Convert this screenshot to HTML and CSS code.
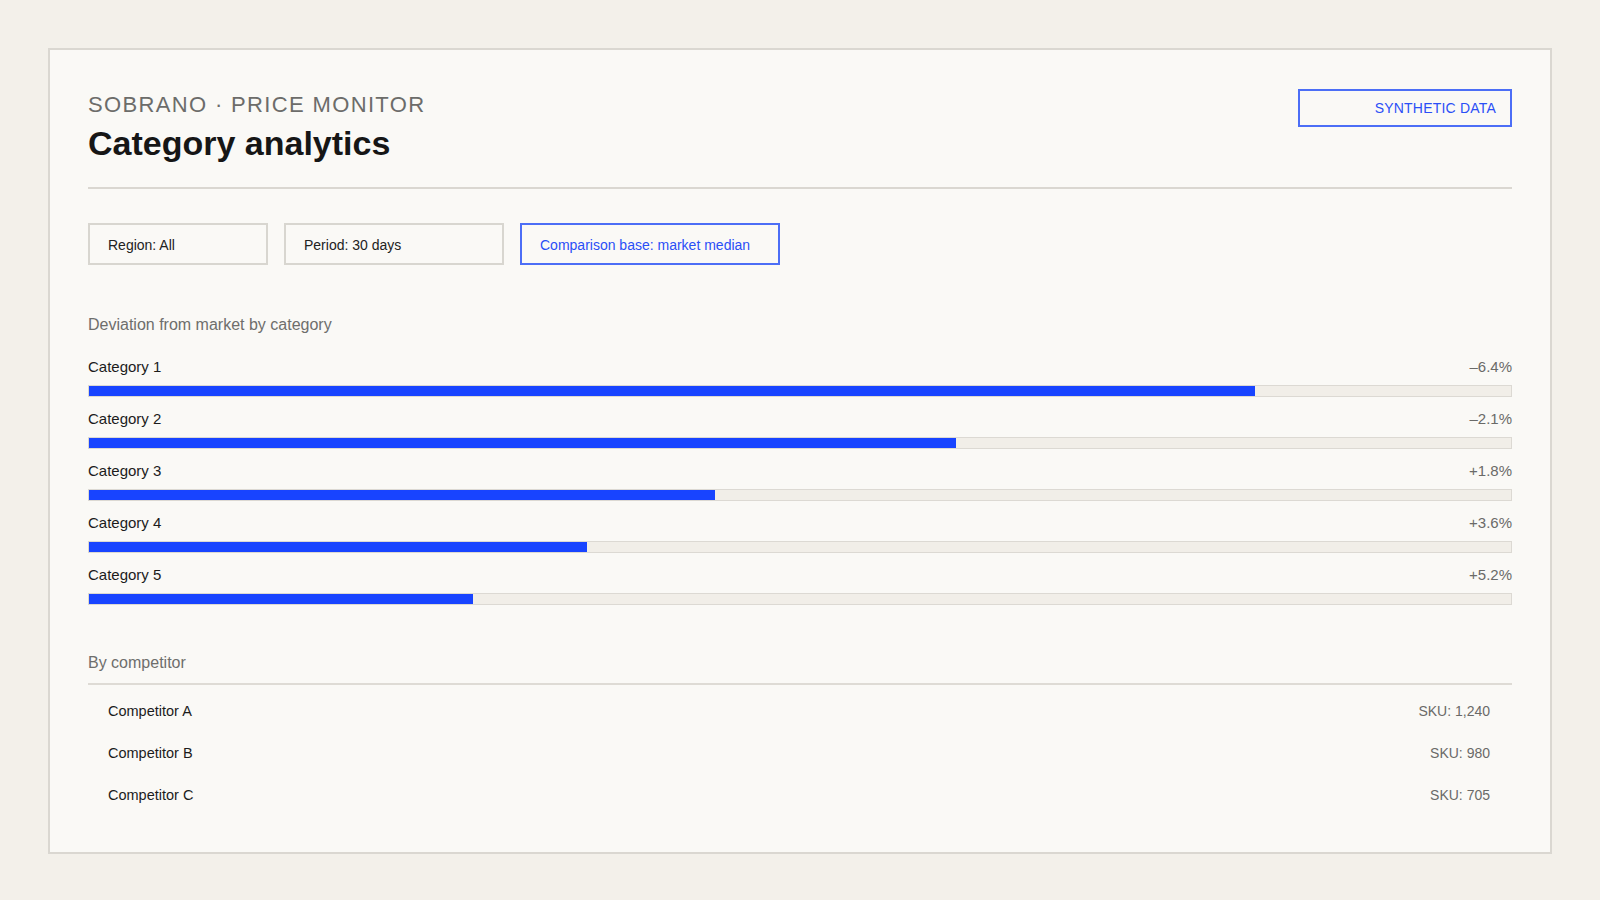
FILE: index.html
```html
<!DOCTYPE html>
<html lang="en">
<head>
<meta charset="utf-8">
<title>Category analytics</title>
<link rel="stylesheet" href="styles.css">
</head>
<body>
<div class="card">
  <header class="header">
    <div class="heading">
      <div class="eyebrow">Sobrano · Price monitor</div>
      <h1 class="title">Category analytics</h1>
    </div>
    <div class="badge">SYNTHETIC DATA</div>
  </header>

  <div class="filters">
    <div class="chip chip-region">Region: All</div>
    <div class="chip chip-period">Period: 30 days</div>
    <div class="chip chip-base chip-active">Comparison base: market median</div>
  </div>

  <section class="deviation">
    <h2 class="section-title">Deviation from market by category</h2>
    <div class="cat-list">
      <div class="cat">
        <div class="cat-head"><span class="cat-name">Category 1</span><span class="cat-value">–6.4%</span></div>
        <div class="track"><div class="fill" style="width: 82%"></div></div>
      </div>
      <div class="cat">
        <div class="cat-head"><span class="cat-name">Category 2</span><span class="cat-value">–2.1%</span></div>
        <div class="track"><div class="fill" style="width: 61%"></div></div>
      </div>
      <div class="cat">
        <div class="cat-head"><span class="cat-name">Category 3</span><span class="cat-value">+1.8%</span></div>
        <div class="track"><div class="fill" style="width: 44%"></div></div>
      </div>
      <div class="cat">
        <div class="cat-head"><span class="cat-name">Category 4</span><span class="cat-value">+3.6%</span></div>
        <div class="track"><div class="fill" style="width: 35%"></div></div>
      </div>
      <div class="cat">
        <div class="cat-head"><span class="cat-name">Category 5</span><span class="cat-value">+5.2%</span></div>
        <div class="track"><div class="fill" style="width: 27%"></div></div>
      </div>
    </div>
  </section>

  <section class="competitors">
    <h2 class="section-title section-title-ruled">By competitor</h2>
    <ul class="comp-list">
      <li class="comp"><span class="comp-name">Competitor A</span><span class="comp-sku">SKU: 1,240</span></li>
      <li class="comp"><span class="comp-name">Competitor B</span><span class="comp-sku">SKU: 980</span></li>
      <li class="comp"><span class="comp-name">Competitor C</span><span class="comp-sku">SKU: 705</span></li>
    </ul>
  </section>
</div>
</body>
</html>
```

FILE: styles.css
```css
* { box-sizing: border-box; }

html, body {
  margin: 0;
  padding: 0;
}

body {
  background: #f3f0ea;
  padding: 48px;
  font-family: "Liberation Sans", Arial, Helvetica, sans-serif;
  color: #1a1a1a;
}

.card {
  background: #faf9f6;
  border: 2px solid #dad7d1;
  padding: 38px 38px 36px;
}

/* Header */
.header {
  display: flex;
  justify-content: space-between;
  align-items: flex-start;
  padding-bottom: 23px;
  border-bottom: 2px solid #dad7d1;
}

.eyebrow {
  font-size: 22px;
  line-height: 33px;
  letter-spacing: 1.35px;
  text-transform: uppercase;
  color: #6c6c6a;
}

.title {
  margin: 2px 0 0;
  font-size: 34px;
  line-height: 41px;
  font-weight: 700;
  color: #161616;
}

.badge {
  margin-top: 1px;
  width: 214px;
  height: 38px;
  border: 2px solid #4c6ef6;
  padding: 0 14px;
  text-align: right;
  font-size: 14px;
  line-height: 34px;
  letter-spacing: 0.2px;
  color: #2a4ff6;
}

/* Filters */
.filters {
  display: flex;
  gap: 16px;
  margin-top: 34px;
}

.chip {
  height: 42px;
  border: 2px solid #d8d6d0;
  padding: 12px 18px 9px;
  font-size: 14px;
  line-height: 17px;
  color: #222;
  white-space: nowrap;
}

.chip-region { width: 180px; }
.chip-period { width: 220px; }
.chip-base { width: 260px; }

.chip-active {
  border-color: #4c6ef6;
  color: #2a4ff6;
}

/* Sections */
.section-title {
  margin: 0;
  font-size: 16px;
  line-height: 20px;
  font-weight: 400;
  color: #6e6e6c;
}

.deviation {
  margin-top: 50px;
}

.cat-list {
  display: flex;
  flex-direction: column;
  gap: 12px;
  margin-top: 22px;
}

.cat-head {
  display: flex;
  justify-content: space-between;
  font-size: 15px;
  line-height: 20px;
}

.cat-name { color: #1c1c1c; }
.cat-value { color: #6a6a68; }

.track {
  margin-top: 8px;
  height: 12px;
  border: 1px solid #dcd9d3;
  background: #f1eee8;
}

.fill {
  height: 100%;
  background: #1844ff;
}

.competitors {
  margin-top: 48px;
}

.section-title-ruled {
  padding-bottom: 10px;
  border-bottom: 2px solid #dedbd5;
}

.comp-list {
  list-style: none;
  margin: 0;
  padding: 5px 0 0;
}

.comp {
  display: flex;
  justify-content: space-between;
  align-items: baseline;
  padding: 12px 22px 12px 20px;
  font-size: 14px;
  line-height: 18px;
}

.comp-name { color: #1c1c1c; font-size: 14.5px; }
.comp-sku { color: #6a6a68; }
```
